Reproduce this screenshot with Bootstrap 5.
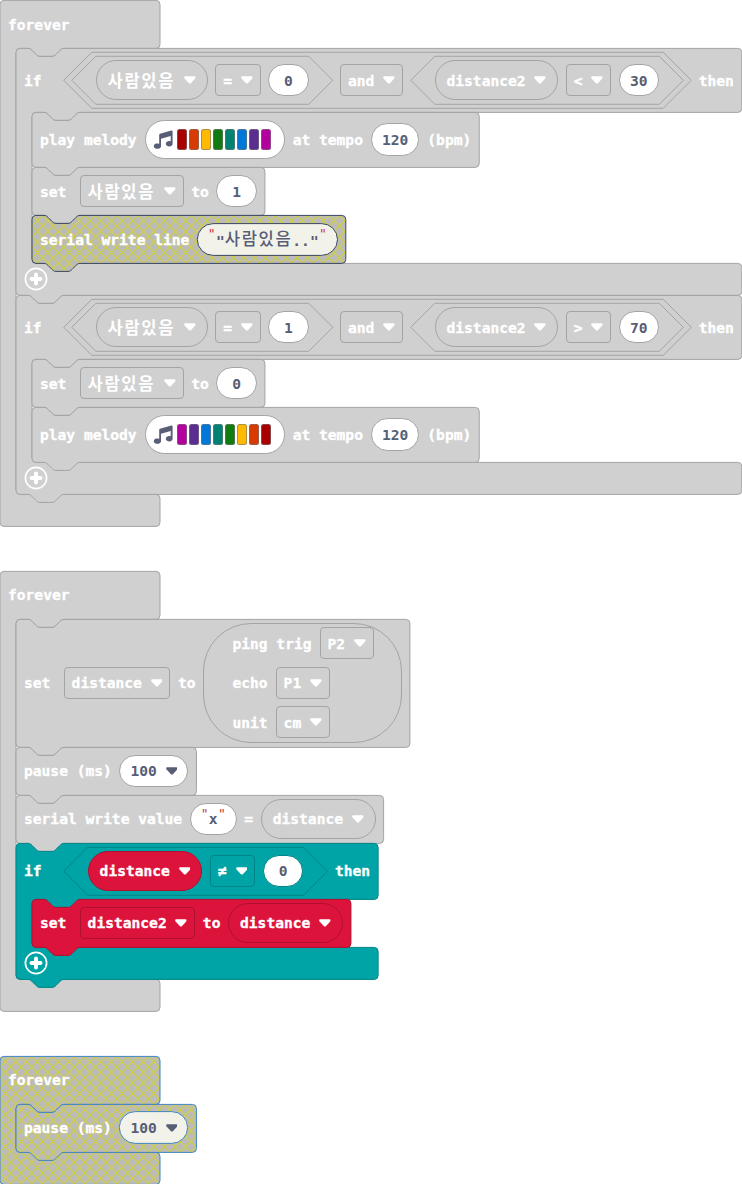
<!DOCTYPE html>
<html lang="ko">
<head>
<meta charset="utf-8">
<meta name="viewport" content="width=device-width, initial-scale=1">
<title>Blocks</title>
<link href="https://cdn.jsdelivr.net/npm/bootstrap@5.3.0/dist/css/bootstrap.min.css" rel="stylesheet">
<style>
  body { background:#fff; overflow:hidden; font:bold 14.6px/20px "DejaVu Sans Mono","Noto Sans CJK KR",monospace; color:#fff; -webkit-text-stroke:.35px currentColor; }
  .workspace { display:flex; flex-direction:column; align-items:flex-start; gap:44.8px; }
  .blk { --fill:#d0d0d0; --line:#a4a4a4; position:relative; width:max-content; }
  .teal { --fill:#00a4a6; --line:#008487; }
  .red { --fill:#dc143c; --line:#b01030; }
  .hatch-navy { --fill:url(#hatch); --line:#3a4663; --pill:url(#hatchLight); }
  .hatch-blue { --fill:url(#hatch); --line:#4285c0; --pill:url(#hatchLight); }
  .outline { position:absolute; left:0; top:0; width:100%; height:100%; overflow:visible; fill:var(--fill); stroke:var(--line); stroke-width:1; }
  .line-row { position:relative; display:flex; align-items:center; gap:7.6px; height:48px; padding:0 8px; white-space:pre; }
  .h55 { height:55px; gap:8px; } .h56 { height:56px; } .h64 { height:64px; } .h128 { height:128px; }
  .hat { width:160px; }
  .stem { position:relative; padding-left:16px; }
  .foot { position:relative; height:32px; padding:0 0 .6px 8px; display:flex; align-items:center; }
  .txt { position:relative; top:.7px; }
  .first { min-width:32px; }
  .slot { position:relative; display:flex; align-items:center; gap:7.5px; flex:none; }
  .slot > * { position:relative; }
  .slot > .outline { position:absolute; }
  .hexo { height:56px; padding:0 8px; }
  .hexi { height:48px; padding:0 24px; }
  .opt, .oval { display:flex; align-items:center; flex:none; border:1px solid var(--line); }
  .opt { height:32px; border-radius:4px; padding:0 7px; }
  .oval { height:40.4px; border-radius:21px; padding:0 11px; background:var(--fill); }
  .caret { width:11.8px; height:8px; margin-left:8.8px; fill:currentColor; flex:none; }
  .val { display:flex; align-items:center; justify-content:center; flex:none; min-width:40.5px; height:32.4px; border-radius:17px; padding:0 10px; border:1px solid var(--line); background:#fff; color:#575e75; position:relative; -webkit-text-stroke:0; }
  .clear { background:none; border-color:transparent; }
  .str { padding:0 9.5px; }
  .q { width:8.6px; text-align:center; color:#c8373c; font-size:13px; position:relative; top:-5px; font-weight:400; }
  .tune { height:39.6px; width:140px; border-radius:20px; padding:0 7px; justify-content:flex-start; }
  .note { width:20px; height:20px; margin-right:4px; fill:#575e75; flex:none; }
  .key { width:10.8px; height:21px; margin-right:1.2px; border-radius:2.5px; border:1px solid #77777799; flex:none; }
  .ko { font-family:"Noto Sans CJK KR",sans-serif; font-size:16.6px; letter-spacing:1.6px; font-weight:700; -webkit-text-stroke:0; position:relative; top:-.2px; }
  .str .ko { font-weight:500; }
  .ping { width:198.7px; height:120.6px; border:1px solid var(--line); border-radius:48px; padding-left:28.2px; display:flex; flex-direction:column; justify-content:center; }
  .ping > div { height:40px; display:flex; align-items:center; gap:8px; }
  .ping .opt { margin-top:-.4px; }
  .plus { width:24px; height:24px; }
  .c1{background:#a80000}.c2{background:#d83b01}.c3{background:#ffb900}.c4{background:#107c10}
  .c5{background:#008272}.c6{background:#0078d7}.c7{background:#5c2d91}.c8{background:#b4009e}
</style>
</head>
<body>
<svg width="0" height="0" class="position-absolute">
  <defs>
    <pattern id="hatch" width="10.6" height="10.6" viewBox="0 0 10 10" patternUnits="userSpaceOnUse">
      <rect x="-1" y="-1" width="12" height="12" fill="#bbb"/><path d="M-2 -2L12 12M12 -2L-2 12M-2 8L2 12M8 -2L12 2M-2 2L2 -2M8 12L12 8" stroke="#d3d32a" stroke-width=".95"/>
    </pattern>
    <pattern id="hatchLight" width="10.6" height="10.6" viewBox="0 0 10 10" patternUnits="userSpaceOnUse">
      <rect x="-1" y="-1" width="12" height="12" fill="#f1f1f0"/><path d="M-2 -2L12 12M12 -2L-2 12" stroke="#f5f5d8" stroke-width="1"/>
    </pattern>
    <symbol id="caret" viewBox="0 0 12 8"><path d="M1.6 .2H10.4C11.9 .2 12.2 1.5 11.4 2.4L7.2 7Q6 8.2 4.8 7L.6 2.4C-.2 1.5 .1 .2 1.6 .2Z"/></symbol>
    <symbol id="note" viewBox="0 0 20 20"><path d="M6.2 4.8Q6.2 4 7 3.7L18.4 .5Q19.6 .3 19.6 1.4V13.5A3.4 2.7 0 1 1 17.7 11.3V6L8 8.7V16.2A3.6 2.7 0 1 1 6.2 13.8Z"/></symbol>
    <symbol id="plus" viewBox="0 0 24 24"><circle cx="12" cy="12" r="10.6" fill="none" stroke="#fff" stroke-width="1.7"/><path d="M12 7.5V16.5M7.5 12H16.5" stroke="#fff" stroke-width="4" stroke-linecap="round"/></symbol>
  </defs>
</svg>

<main class="workspace">
  <section class="blk" data-shape="hat">
    <div class="line-row head hat"><span class="txt">forever</span></div>
    <div class="stem">
      <div class="blk" data-shape="c">
        <div class="line-row head h64">
          <span class="txt first">if</span>
          <div class="slot hexo" data-shape="hex">
            <div class="slot hexi" data-shape="hex">
              <div class="oval"><span class="ko">사람있음</span><svg class="caret"><use href="#caret"/></svg></div>
              <div class="opt"><span class="txt">=</span><svg class="caret"><use href="#caret"/></svg></div>
              <div class="val"><span class="txt">0</span></div>
            </div>
            <div class="opt"><span class="txt">and</span><svg class="caret"><use href="#caret"/></svg></div>
            <div class="slot hexi" data-shape="hex">
              <div class="oval"><span class="txt">distance2</span><svg class="caret"><use href="#caret"/></svg></div>
              <div class="opt"><span class="txt">&lt;</span><svg class="caret"><use href="#caret"/></svg></div>
              <div class="val"><span class="txt">30</span></div>
            </div>
          </div>
          <span class="txt">then</span>
        </div>
        <div class="stem">
          <div class="blk" data-shape="row">
            <div class="line-row h55"><span class="txt">play melody</span>
              <div class="val tune"><svg class="note"><use href="#note"/></svg><i class="key c1"></i><i class="key c2"></i><i class="key c3"></i><i class="key c4"></i><i class="key c5"></i><i class="key c6"></i><i class="key c7"></i><i class="key c8"></i></div>
              <span class="txt">at tempo</span><div class="val"><span class="txt">120</span></div><span class="txt">(bpm)</span></div>
          </div>
          <div class="blk" data-shape="row">
            <div class="line-row"><span class="txt first">set</span><div class="opt"><span class="ko">사람있음</span><svg class="caret"><use href="#caret"/></svg></div><span class="txt">to</span><div class="val"><span class="txt">1</span></div></div>
          </div>
          <div class="blk hatch-navy" data-shape="row">
            <div class="line-row"><span class="txt">serial write line</span><div class="val str clear" data-shape="pill"><span class="q">"</span><span class="txt">"<span class="ko">사람있음</span>.."</span><span class="q">"</span></div></div>
          </div>
        </div>
        <div class="foot"><svg class="plus"><use href="#plus"/></svg></div>
      </div>
      <div class="blk" data-shape="c">
        <div class="line-row head h64">
          <span class="txt first">if</span>
          <div class="slot hexo" data-shape="hex">
            <div class="slot hexi" data-shape="hex">
              <div class="oval"><span class="ko">사람있음</span><svg class="caret"><use href="#caret"/></svg></div>
              <div class="opt"><span class="txt">=</span><svg class="caret"><use href="#caret"/></svg></div>
              <div class="val"><span class="txt">1</span></div>
            </div>
            <div class="opt"><span class="txt">and</span><svg class="caret"><use href="#caret"/></svg></div>
            <div class="slot hexi" data-shape="hex">
              <div class="oval"><span class="txt">distance2</span><svg class="caret"><use href="#caret"/></svg></div>
              <div class="opt"><span class="txt">&gt;</span><svg class="caret"><use href="#caret"/></svg></div>
              <div class="val"><span class="txt">70</span></div>
            </div>
          </div>
          <span class="txt">then</span>
        </div>
        <div class="stem">
          <div class="blk" data-shape="row">
            <div class="line-row"><span class="txt first">set</span><div class="opt"><span class="ko">사람있음</span><svg class="caret"><use href="#caret"/></svg></div><span class="txt">to</span><div class="val"><span class="txt">0</span></div></div>
          </div>
          <div class="blk" data-shape="row">
            <div class="line-row h55"><span class="txt">play melody</span>
              <div class="val tune"><svg class="note"><use href="#note"/></svg><i class="key c8"></i><i class="key c7"></i><i class="key c6"></i><i class="key c5"></i><i class="key c4"></i><i class="key c3"></i><i class="key c2"></i><i class="key c1"></i></div>
              <span class="txt">at tempo</span><div class="val"><span class="txt">120</span></div><span class="txt">(bpm)</span></div>
          </div>
        </div>
        <div class="foot"><svg class="plus"><use href="#plus"/></svg></div>
      </div>
    </div>
    <div class="foot"></div>
  </section>

  <section class="blk" data-shape="hat">
    <div class="line-row head hat"><span class="txt">forever</span></div>
    <div class="stem">
      <div class="blk" data-shape="row">
        <div class="line-row h128"><span class="txt first">set</span><div class="opt"><span class="txt">distance</span><svg class="caret"><use href="#caret"/></svg></div><span class="txt">to</span>
          <div class="ping">
            <div><span class="txt">ping trig</span><div class="opt"><span class="txt">P2</span><svg class="caret"><use href="#caret"/></svg></div></div>
            <div><span class="txt">echo</span><div class="opt"><span class="txt">P1</span><svg class="caret"><use href="#caret"/></svg></div></div>
            <div><span class="txt">unit</span><div class="opt"><span class="txt">cm</span><svg class="caret"><use href="#caret"/></svg></div></div>
          </div>
        </div>
      </div>
      <div class="blk" data-shape="row">
        <div class="line-row"><span class="txt">pause (ms)</span><div class="val"><span class="txt">100</span><svg class="caret"><use href="#caret"/></svg></div></div>
      </div>
      <div class="blk" data-shape="row">
        <div class="line-row"><span class="txt">serial write value</span><div class="val str"><span class="q">"</span><span class="txt">x</span><span class="q">"</span></div><span class="txt">=</span><div class="oval"><span class="txt">distance</span><svg class="caret"><use href="#caret"/></svg></div></div>
      </div>
      <div class="blk teal" data-shape="c">
        <div class="line-row head h56">
          <span class="txt first">if</span>
          <div class="slot hexi" data-shape="hex">
            <div class="oval red"><span class="txt">distance</span><svg class="caret"><use href="#caret"/></svg></div>
            <div class="opt"><span class="txt">≠</span><svg class="caret"><use href="#caret"/></svg></div>
            <div class="val"><span class="txt">0</span></div>
          </div>
          <span class="txt">then</span>
        </div>
        <div class="stem">
          <div class="blk red" data-shape="row">
            <div class="line-row"><span class="txt first">set</span><div class="opt"><span class="txt">distance2</span><svg class="caret"><use href="#caret"/></svg></div><span class="txt">to</span><div class="oval"><span class="txt">distance</span><svg class="caret"><use href="#caret"/></svg></div></div>
          </div>
        </div>
        <div class="foot"><svg class="plus"><use href="#plus"/></svg></div>
      </div>
    </div>
    <div class="foot"></div>
  </section>

  <section class="blk hatch-blue" data-shape="hat">
    <div class="line-row head hat"><span class="txt">forever</span></div>
    <div class="stem">
      <div class="blk hatch-blue" data-shape="row">
        <div class="line-row"><span class="txt">pause (ms)</span><div class="val clear" data-shape="pill"><span class="txt">100</span><svg class="caret"><use href="#caret"/></svg></div></div>
      </div>
    </div>
    <div class="foot"></div>
  </section>
</main>

<script src="https://cdn.jsdelivr.net/npm/bootstrap@5.3.0/dist/js/bootstrap.bundle.min.js"></script>
<script>
  // Draws each block's outline behind its content, sized from the laid-out content.
  const notchR = 'h8c2 0 3 1 4 2l4 4c1 1 2 2 4 2h12c2 0 3 -1 4 -2l4 -4c1 -1 2 -2 4 -2';
  const notchL = 'c-2 0 -3 1 -4 2l-4 4c-1 1 -2 2 -4 2h-12c-2 0 -3 -1 -4 -2l-4 -4c-1 -1 -2 -2 -4 -2';
  const right = (w, y0, y1) => `H${w - 4}a4 4 0 0 1 4 4V${y1 - 4}a4 4 0 0 1 -4 4`;
  const shift = { hex: 'translate(-.2 .3)', pill: 'translate(-.7 -.4)' };
  document.querySelectorAll('[data-shape]').forEach(el => {
    const box = el.getBoundingClientRect(), kind = el.dataset.shape;
    const h = box.height;
    let w = box.width, d;
    if (kind === 'hex') {
      const r = h / 2;
      d = `M${r} 0H${w - r}L${w} ${r}L${w - r} ${h}H${r}L0 ${r}Z`;
    } else if (kind === 'pill') {
      const r = (h - .6) / 2;
      d = `M${r} 0H${w - r - .6}a${r} ${r} 0 0 1 0 ${2 * r}H${r}a${r} ${r} 0 0 1 0 ${-2 * r}Z`;
    } else {
      const bottom = kind === 'hat' ? 'H4' : `H48${notchL}H4`;
      d = 'M0 4a4 4 0 0 1 4 -4' + (kind === 'hat' ? '' : notchR);
      if (kind === 'row') d += right(w, 0, h);
      else {
        const head = el.querySelector(':scope > .head').getBoundingClientRect();
        w = head.width;
        d += right(w, 0, head.height) + `H64${notchL}H20a4 4 0 0 0 -4 4V${h - 36}a4 4 0 0 0 4 4` + right(w, h - 32, h);
      }
      d += bottom + 'a4 4 0 0 1 -4 -4Z';
    }
    const svg = document.createElementNS('http://www.w3.org/2000/svg', 'svg');
    svg.setAttribute('class', 'outline');
    const p = document.createElementNS('http://www.w3.org/2000/svg', 'path');
    p.setAttribute('d', d);
    p.setAttribute('transform', shift[kind] || 'translate(0 .4)');
    if (kind === 'pill') { p.style.fill = 'var(--pill)'; svg.style.zIndex = '-1'; el.style.zIndex = '0'; }
    svg.appendChild(p);
    el.prepend(svg);
  });
</script>
</body>
</html>
